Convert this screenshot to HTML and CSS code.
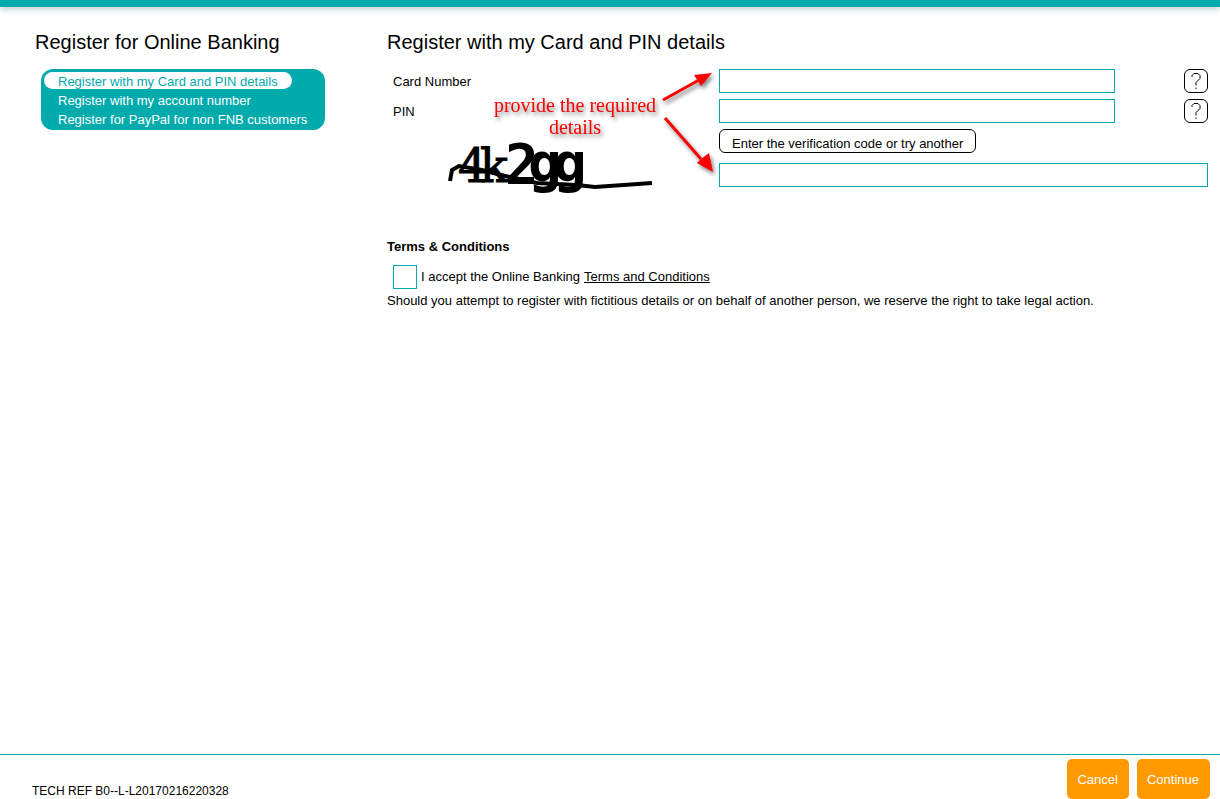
FILE: index.html
```html
<!DOCTYPE html>
<html lang="en">
<head>
<meta charset="utf-8">
<title>Register for Online Banking</title>
<link rel="stylesheet" href="styles.css">
</head>
<body>
<div class="topbar"></div>
<div class="content">
  <aside class="sidebar">
    <h1 class="title">Register for Online Banking</h1>
    <nav class="menu">
      <a class="menu-item active" href="#card">Register with my Card and PIN details</a>
      <a class="menu-item" href="#account">Register with my account number</a>
      <a class="menu-item" href="#paypal">Register for PayPal for non FNB customers</a>
    </nav>
  </aside>
  <main class="main">
    <h2 class="title">Register with my Card and PIN details</h2>
    <form class="form" id="register">
      <div class="row">
        <label class="label" for="card">Card Number</label>
        <input class="field" id="card" type="text">
        <button class="help" type="button" aria-label="Card number help"><svg width="12" height="18" viewBox="0 0 12 18"><path d="M2 5V3.5L4 1.5H8L10 3.500V6.500L6 10.500V13.500M6 15.500V17"/></svg></button>
      </div>
      <div class="row">
        <label class="label" for="pin">PIN</label>
        <input class="field" id="pin" type="password">
        <button class="help" type="button" aria-label="PIN help"><svg width="12" height="18" viewBox="0 0 12 18"><path d="M2 5V3.5L4 1.5H8L10 3.500V6.500L6 10.500V13.500M6 15.500V17"/></svg></button>
      </div>
      <div class="row verify">
        <svg class="captcha" width="210" height="64" viewBox="0 0 210 64" role="img" aria-label="Verification code">
          <text class="captcha-thin" x="11" y="46">4</text>
          <text class="captcha-thin" x="33" y="46">k</text>
          <text class="captcha-bold" x="58" y="47">2</text>
          <text class="captcha-bold" x="81" y="46">g</text>
          <text class="captcha-bold" x="106" y="46">g</text>
          <path d="M3 45L5 34L12 30L35 34L58 40L90 47L130 49L148 51L205 47"/>
        </svg>
        <div class="code">
          <button class="another" type="button">Enter the verification code or try another</button>
          <input class="field" type="text" aria-label="Verification code">
        </div>
      </div>
      <div class="note">
        <p class="note-text">provide the required details</p>
        <svg class="arrows" width="60" height="110" viewBox="0 0 60 110">
          <path class="shaft" d="M0 31L36 11M2 49L38 90"/>
          <path class="head" d="M49 4L38 17L35 12L31 6ZM50 103L34 94L38 90L46 84Z"/>
        </svg>
      </div>
    </form>
    <section class="terms">
      <h3 class="subtitle">Terms &amp; Conditions</h3>
      <div class="accept">
        <input class="check" id="accept" type="checkbox">
        <label for="accept">I accept the Online Banking</label>
        <a class="link" href="#terms">Terms and Conditions</a>
      </div>
      <p class="legal">Should you attempt to register with fictitious details or on behalf of another person, we reserve the right to take legal action.</p>
    </section>
  </main>
</div>
<footer class="footer">
  <span class="ref">TECH REF B0--L-L20170216220328</span>
  <div class="actions">
    <button class="action" type="button">Cancel</button>
    <button class="action" type="submit" form="register">Continue</button>
  </div>
</footer>
</body>
</html>
```
FILE: styles.css
```css
* { box-sizing: border-box; }
body {
  margin: 0;
  min-height: 100vh;
  display: flex;
  flex-direction: column;
  background: #fff;
  color: #000;
  font: 13px/20px "Liberation Sans", Arial, sans-serif;
}
button, input { font: inherit; }
.topbar {
  height: 7px;
  background: #00aaad;
  box-shadow: 0 2px 6px rgba(0, 90, 80, 0.3);
}
.content {
  flex: 1;
  display: flex;
  padding: 23px 12px 24px 35px;
}
.sidebar { flex: 0 0 352px; }
.main { flex: 1; min-width: 0; }
.title {
  margin: 0 0 15px;
  font-size: 20px;
  line-height: 24px;
  font-weight: 400;
}
.menu {
  width: 284px;
  margin-left: 6px;
  padding: 3px;
  border-radius: 12px;
  background: #00aaad;
  display: flex;
  flex-direction: column;
  align-items: flex-start;
  gap: 2px;
}
.menu-item {
  padding: 1px 14px 0;
  line-height: 17px;
  height: 17px;
  color: #fff;
  text-decoration: none;
  white-space: nowrap;
}
.active {
  border-radius: 9px;
  background: #fff;
  color: #00aaad;
}
.form {
  position: relative;
  display: flex;
  flex-direction: column;
  gap: 6px;
}
.row {
  display: grid;
  grid-template-columns: 332fr 396fr 93fr;
  align-items: center;
}
.label { padding: 2px 0 0 6px; }
.field {
  width: 100%;
  height: 24px;
  padding: 0 4px;
  border: 1px solid #00aaad;
  background: #fff;
}
.help {
  justify-self: end;
  width: 24px;
  height: 24px;
  padding: 0;
  border: 1px solid #000;
  border-radius: 6px;
  background: #fff;
  display: grid;
  place-items: center;
}
.help path { fill: none; stroke: #000; stroke-width: 1; }
.verify { align-items: start; }
.captcha { margin: 7px 0 0 60px; overflow: visible; }
.captcha text { fill: #000; }
.captcha .captcha-thin {
  font: 46px "DejaVu Serif", serif;
  stroke: #000;
  stroke-width: 1;
}
.captcha .captcha-bold { font: bold 56px "DejaVu Sans Mono", monospace; }
.captcha path {
  fill: none;
  stroke: #000;
  stroke-width: 4;
}
.code {
  grid-column: 2 / 4;
  display: flex;
  flex-direction: column;
  align-items: flex-start;
  gap: 10px;
}
.another {
  height: 24px;
  padding: 4px 12px 0;
  border: 1px solid #000;
  border-radius: 6px;
  background: #fff;
  color: #000;
  line-height: 20px;
  white-space: nowrap;
}
.note {
  position: absolute;
  top: 0;
  left: 100px;
  width: 236px;
  display: flex;
  color: #f00;
  filter: drop-shadow(2px 3px 2px rgba(0, 0, 0, 0.5));
  pointer-events: none;
}
.note-text {
  width: 176px;
  margin: 25px 0 0;
  font: 20px/22px "Liberation Serif", "Times New Roman", serif;
  text-align: center;
}
.arrows { overflow: visible; }
.shaft { fill: none; stroke: #f00; stroke-width: 3; }
.head { fill: #f00; }
.terms { margin-top: 37px; }
.subtitle {
  margin: 0;
  font-size: 13px;
  line-height: 20px;
}
.accept {
  display: flex;
  align-items: center;
  gap: 4px;
  margin: 8px 0 2px 6px;
}
.check {
  appearance: none;
  width: 24px;
  height: 24px;
  margin: 0;
  border: 1px solid #00aaad;
}
.link { color: #000; }
.legal { margin: 0; }
.footer {
  display: flex;
  align-items: flex-end;
  justify-content: space-between;
  padding: 4px 10px 0 32px;
  border-top: 1px solid #00aaad;
}
.ref { font-size: 12px; line-height: 16px; }
.actions { display: flex; gap: 8px; }
.action {
  height: 40px;
  padding: 2px 11px 0 10px;
  border: 0;
  border-radius: 5px;
  background: #ff9900;
  color: #fff;
}
```
